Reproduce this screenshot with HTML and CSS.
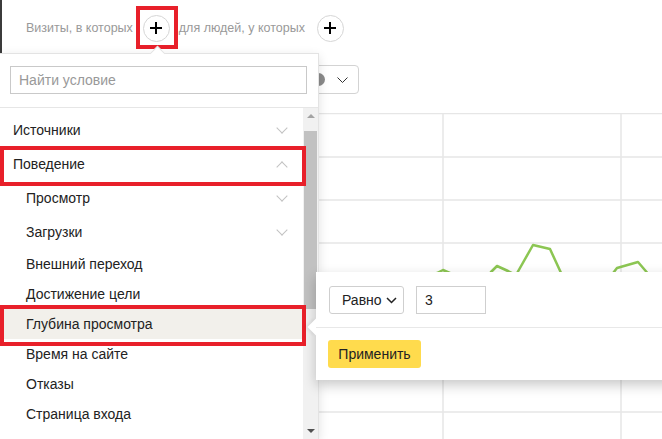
FILE: index.html
```html
<!DOCTYPE html>
<html lang="ru">

<head>
    <meta charset="UTF-8">
    <title>Сегментация</title>
    <link rel="stylesheet" href="styles.css">
</head>

<body>
    <div class="page">
        <div class="filters">
            <span class="filters-label">Визиты, в которых</span>
            <button class="add marked">
                <svg width="12" height="12" viewBox="0 0 12 12"><path d="M6 0v12M0 6h12" stroke="#000" stroke-width="2"/></svg>
            </button>
            <span class="filters-label">для людей, у которых</span>
            <button class="add add-last">
                <svg width="12" height="12" viewBox="0 0 12 12"><path d="M6 0v12M0 6h12" stroke="#000" stroke-width="2"/></svg>
            </button>
        </div>

        <div class="toolbar">
            <div class="period">
                <span class="dot"></span>
                <svg width="11" height="6" viewBox="0 0 11 6"><path d="M0.5 0.5l5 5 5-5" stroke="#333" fill="none"/></svg>
            </div>
        </div>

        <div class="chart">
            <svg width="662" height="326" viewBox="0 113 662 326">
                <g stroke="#e6e6e6" stroke-width="1.5">
                    <path d="M0 113.5h662M0 157h662M0 200h662M0 243h662M0 285h662M0 328h662M0 370h662M0 412h662"/>
                    <path d="M87 113v326M265 113v326M443 113v326M621 113v326"/>
                </g>
                <polyline fill="none" stroke="#8cc653" stroke-width="2.5" stroke-linejoin="round"
                    points="400,290 437,273 443,270 452,274 480,290 491,272 497,266 508,271 516,275 533,245 550,249 562,275 600,290 617,268 638,262 650,276 662,290"/>
            </svg>
        </div>

        <div class="dropdown">
            <div class="search">
                <input type="text" placeholder="Найти условие">
            </div>
            <div class="list-wrap">
                <div class="list">
                    <div class="item">Источники <span class="chevron"></span></div>
                    <div class="item marked marked-group">Поведение <span class="chevron chevron-up"></span></div>
                    <div class="item sub">Просмотр <span class="chevron"></span></div>
                    <div class="item sub">Загрузки <span class="chevron"></span></div>
                    <div class="item sub leaf">Внешний переход</div>
                    <div class="item sub leaf">Достижение цели</div>
                    <div class="item sub leaf active marked marked-leaf">Глубина просмотра</div>
                    <div class="item sub leaf">Время на сайте</div>
                    <div class="item sub leaf">Отказы</div>
                    <div class="item sub leaf">Страница входа</div>
                </div>
                <div class="scrollbar">
                    <span class="arrow arrow-up"></span>
                    <span class="thumb"></span>
                    <span class="arrow arrow-down"></span>
                </div>
            </div>
        </div>

        <div class="popup">
            <div class="popup-row">
                <button class="select">Равно
                    <svg width="11" height="7" viewBox="0 0 11 7"><path d="M1 1l4.5 4.5L10 1" stroke="#222" stroke-width="1.5" fill="none"/></svg>
                </button>
                <input class="value" type="text" value="3">
            </div>
            <div class="popup-footer">
                <button class="apply">Применить</button>
            </div>
        </div>
    </div>
</body>

</html>
```

FILE: styles.css
```css
body {
    margin: 0;
    background: #fff;
    font-family: 'Liberation Sans', Arial, sans-serif;
    color: #222;
}

.page {
    position: relative;
    width: 662px;
    height: 439px;
    overflow: hidden;
}

.filters {
    display: flex;
    align-items: center;
    height: 53px;
    padding-left: 24px;
    border-left: 2px solid #3b3b3b;
    box-sizing: border-box;
    padding-top: 3px;
}

.filters-label {
    font-size: 12.5px;
    color: #999;
}

.add {
    position: relative;
    display: flex;
    align-items: center;
    justify-content: center;
    width: 27px;
    height: 27px;
    margin: 0 9px 0 10px;
    padding: 0;
    background: #fff;
    border: 1px solid #d6d6d6;
    border-radius: 50%;
}

.add-last {
    margin-left: 12px;
}

.marked::after {
    content: '';
    position: absolute;
    border: 4px solid #e8202a;
    pointer-events: none;
}

.add.marked::after {
    top: -10px;
    left: -8px;
    right: -9px;
    bottom: -8px;
}

.toolbar {
    display: flex;
    padding: 12px 0 0 250px;
    height: 60px;
    box-sizing: border-box;
}

.period {
    display: flex;
    align-items: center;
    justify-content: flex-end;
    gap: 12px;
    width: 109px;
    height: 29px;
    padding-right: 10px;
    border: 1px solid #d3d3d3;
    border-radius: 4px;
    box-sizing: border-box;
}

.dot {
    width: 13px;
    height: 13px;
    border-radius: 50%;
    background: #8a8a8a;
}

.chart svg {
    display: block;
}

.dropdown {
    position: absolute;
    top: 53px;
    left: 0;
    bottom: 0;
    width: 319px;
    background: #fff;
    border: 1px solid #e3e3e3;
    border-left: none;
    border-bottom: none;
    box-shadow: 0 3px 10px rgba(0, 0, 0, 0.12);
    box-sizing: border-box;
    display: flex;
    flex-direction: column;
}

.dropdown::before {
    content: '';
    position: absolute;
    top: -6px;
    left: 152px;
    width: 10px;
    height: 10px;
    background: #fff;
    border-top: 1px solid #e3e3e3;
    border-left: 1px solid #e3e3e3;
    transform: rotate(45deg);
}

.search {
    padding: 12px 0 13px 10px;
    border-bottom: 1px solid #e6e6e6;
}

.search input {
    width: 297px;
    height: 28px;
    padding: 0 8px;
    border: 1px solid #c9c9c9;
    box-sizing: border-box;
    font-family: inherit;
    font-size: 14px;
    color: #222;
}

.search input::placeholder {
    color: #999;
}

.list-wrap {
    display: flex;
    flex: 1;
}

.list {
    width: 303px;
    padding-top: 5px;
}

.item {
    position: relative;
    display: flex;
    align-items: center;
    justify-content: space-between;
    height: 34px;
    padding: 0 15px 0 13px;
    font-size: 14px;
    color: #222;
}

.item.sub {
    padding-left: 26px;
}

.item.leaf {
    height: 30px;
}

.item.active {
    background: #f2f0eb;
}

.marked-group::after {
    top: -1px;
    left: 0;
    right: -3px;
    bottom: -5px;
}

.marked-leaf::after {
    top: -4px;
    left: 0;
    right: -3px;
    bottom: -7px;
}

.chevron {
    width: 7px;
    height: 7px;
    margin-right: 2px;
    margin-top: -5px;
    border-right: 1px solid #c2c2c2;
    border-bottom: 1px solid #c2c2c2;
    transform: rotate(45deg);
}

.chevron-up {
    margin-top: 5px;
    transform: rotate(225deg);
}

.scrollbar {
    display: flex;
    flex-direction: column;
    align-items: center;
    width: 15px;
    background: #f1f1f1;
}

.arrow {
    width: 0;
    height: 0;
    border-left: 4px solid transparent;
    border-right: 4px solid transparent;
}

.arrow-up {
    margin: 6px 0 13px;
    border-bottom: 4px solid #a3a3a3;
}

.arrow-down {
    margin: auto 0 6px;
    border-top: 4px solid #505050;
}

.thumb {
    width: 13px;
    height: 178px;
    background: #c1c1c1;
}

.popup {
    position: absolute;
    top: 272px;
    left: 316px;
    width: 380px;
    background: #fff;
    box-shadow: 0 5px 12px rgba(0, 0, 0, 0.22);
}

.popup::before {
    content: '';
    position: absolute;
    top: 49px;
    left: -6px;
    width: 12px;
    height: 12px;
    background: #fff;
    transform: rotate(45deg);
    box-shadow: -2px 2px 3px rgba(0, 0, 0, 0.06);
}

.popup-row {
    display: flex;
    gap: 12px;
    padding: 14px 13px 13px;
}

.select {
    display: flex;
    align-items: center;
    gap: 4px;
    width: 75px;
    height: 28px;
    padding: 0 0 0 12px;
    background: #fff;
    border: 1px solid #cfcfcf;
    border-radius: 3px;
    font-family: inherit;
    font-size: 14px;
    color: #222;
}

.value {
    width: 70px;
    height: 28px;
    padding: 0 8px;
    border: 1px solid #cfcfcf;
    box-sizing: border-box;
    font-family: inherit;
    font-size: 14px;
    color: #222;
}

.popup-footer {
    position: relative;
    padding: 12px 12px 12px;
    border-top: 1px solid #e8e8e8;
}

.apply {
    display: block;
    width: 93px;
    height: 28px;
    padding: 0;
    background: #ffdb4d;
    border: none;
    border-radius: 3px;
    font-family: inherit;
    font-size: 14px;
    color: #222;
}
```
